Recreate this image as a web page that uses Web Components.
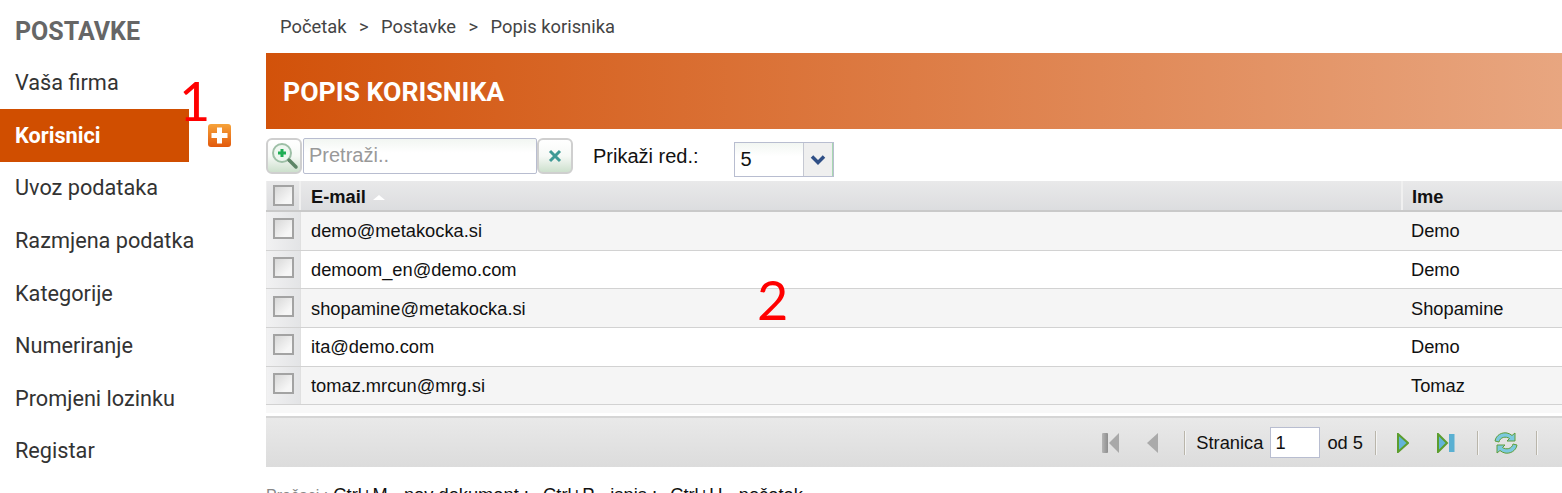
<!DOCTYPE html>
<html lang="hr"><head><meta charset="utf-8"><title>Popis korisnika</title>
<style>
html,body{margin:0;padding:0;height:493px;overflow:hidden;background:#fff}
body{font-family:"Liberation Sans",Arial,sans-serif;position:relative}
app-shell{width:1562px;height:493px}
.mark{position:absolute;color:#f00;font:54px/1 Lato,sans-serif}
</style></head><body>
<template id="t-shell"><style>
:host{display:flex;align-items:flex-start}
.main{flex:1;min-width:0}
</style><slot name="side"></slot><div class="main"><slot></slot></div></template>

<template id="t-side"><style>
:host{display:block;width:266px;flex:none;font-family:Roboto,sans-serif;position:relative}
h2{margin:0;padding:19px 0 0 15px;height:37.400px;font:700 25px/26px Roboto,sans-serif;color:#666}
</style><h2><slot name="title"></slot></h2><slot></slot></template>

<template id="t-item"><style>
:host{display:block;height:52.600px;position:relative}
a{display:flex;align-items:center;box-sizing:border-box;height:100%;padding-left:15px;font:21.700px Roboto,sans-serif;color:#333}
:host([active]) a{width:189px;background:#d04e00;color:#fff;font-weight:700}
svg{position:absolute;left:207px;top:14px}
:host(:not([add])) svg{display:none}
</style><a><slot></slot></a><svg width="25" height="25" viewBox="0 0 25 25"><defs><linearGradient id="g" x1="0" y1="0" x2="0" y2="1"><stop offset="0" stop-color="#f6a33a"/><stop offset="1" stop-color="#e2590c"/></linearGradient></defs><rect x="1" y="1" width="23" height="23" rx="3" fill="url(#g)"/><path d="M10 4.500h5V10h5.500v5H15v5.500h-5V15H4.500v-5H10z" fill="#fff"/></svg></template>

<template id="t-crumbs"><style>
:host{display:flex;gap:12.500px;height:53px;box-sizing:border-box;padding:17px 0 0 14px;font:18.330px/20px Roboto,sans-serif;color:#444}
</style><slot></slot></template>

<template id="t-banner"><style>
:host{display:flex;align-items:center;height:76px;box-sizing:border-box;padding:1px 0 0 17px;background:linear-gradient(90deg,#d2520a 0%,#e8a680 100%);color:#fff;font:700 26.660px Roboto,sans-serif}
</style><slot></slot></template>

<template id="t-toolbar"><style>
:host{display:flex;align-items:center;height:52px;box-sizing:border-box;padding-top:2px;font:20px "Liberation Sans",sans-serif;color:#111}
.btn{box-sizing:border-box;width:36px;height:36px;border:2px solid #cfcfcf;border-radius:6px;background:linear-gradient(#fff 0%,#f6f9f6 50%,#cde0cd 100%);display:flex;align-items:center;justify-content:center;flex:none}
.inp{box-sizing:border-box;width:234px;height:36px;border:1px solid #b8bdd0;border-radius:2px;background:linear-gradient(#f2f6f2,#fff 40%);margin:0 0 0 1px;padding:0 5px;font:20px/32px "Liberation Sans",sans-serif;color:#999}
.lbl{margin:0 35px 0 20px}
.sel{box-sizing:border-box;width:100px;height:35px;margin-top:7px;border:1px solid #b8bdd0;display:flex;background:linear-gradient(#f2f6f2,#fff 40%);line-height:33px}
.sel span{flex:1;padding-left:6px}
.sel i{width:28px;border-left:1px solid #c5c8d2;background:#efefef;display:flex;align-items:center;justify-content:center;border-right:1px solid #a8d8b0}
</style>
<div class="btn"><svg width="30" height="30" viewBox="0 0 30 30"><circle cx="13" cy="12" r="9" fill="#eef7f0" stroke="#9dbfa6" stroke-width="2"/><path d="M20 19l7 7" stroke="#5d8566" stroke-width="3.500" stroke-linecap="round"/><path d="M13 8v8M9 12h8" stroke="#1fae55" stroke-width="3"/></svg></div>
<div class="inp">Pretraži..</div>
<div class="btn"><svg width="18" height="18" viewBox="0 0 18 18"><path d="M4 4l10 10M14 4L4 14" stroke="#3f9a96" stroke-width="3"/></svg></div>
<span class="lbl">Prikaži red.:</span>
<div class="sel"><span>5</span><i><svg width="16" height="12" viewBox="0 0 16 12"><path d="M2 2.500l6 6 6-6" fill="none" stroke="#2f4f86" stroke-width="3.500"/></svg></i></div>
</template>

<template id="t-grid"><style>
:host{display:block;font:18.300px "Liberation Sans",sans-serif;color:#111;background:linear-gradient(#fff,#fff) no-repeat 0 100%/100% 3px,#f8f8f8;padding-bottom:11px}
</style><slot></slot></template>

<template id="t-row"><style>
:host{display:grid;grid-template-columns:35px 1100px 1fr;box-sizing:border-box;height:38.700px;border-bottom:1px solid #d2d2d2;background:#f5f5f5;align-items:stretch}
:host([even]){background:#fff}
:host([head]){height:31px;background:linear-gradient(#e9e9ea,#dcdddf);border-bottom:2px solid #c9c9c9;font-weight:700}
.c{display:flex;align-items:center;padding:1px 0 0 10px;min-width:0}
:host([head]) .c{padding-top:3px}
:host([head]) .c.ime{border-left:2px solid #f0f0f0;padding-left:9px}
.chk{background:linear-gradient(90deg,#f1f1f2,#e3e4e6);border-right:1px solid #e0e0e0;padding:0 0 4px 6px;border-left:1px solid #eee;box-sizing:border-box}
:host([head]) .chk{padding:0 0 0 6px;background:none;border-right:2px solid #f0f0f0}
.box{width:21px;height:21px;box-sizing:border-box;border:2px solid #a3a3a3;background:linear-gradient(135deg,#d8d8d8,#f6f6f6 75%)}
.sort{width:0;height:0;border:6px solid transparent;border-top:0;border-bottom:5px solid #fff;margin-left:7px}
</style><div class="c chk"><div class="box"></div></div><div class="c"><slot name="mail"></slot><span class="sort" id="s" hidden></span></div><div class="c ime"><slot name="ime"></slot></div></template>

<template id="t-pager"><style>
:host{display:flex;align-items:center;justify-content:flex-end;box-sizing:border-box;height:51px;padding-right:24px;border-top:2px solid #d5d5d5;background:linear-gradient(#e9e9e9,#dcdcdc);font:18.300px "Liberation Sans",sans-serif;color:#111}
.sep{height:24px;background:#b9b5aa;border-right:1px solid #f4f4f4;box-sizing:content-box;width:1px}
svg{display:block}
input{box-sizing:border-box;width:50px;height:31px;border:1px solid #b8bdd0;margin:0 7px;padding:0 4px;font:inherit;color:#111;background:#fff}
</style>
<svg width="19" height="22" viewBox="0 0 19 22" style="margin-right:26px"><defs><linearGradient id="gr" x1="0" y1="0" x2="1" y2="0"><stop offset="0" stop-color="#b5b5b5"/><stop offset="1" stop-color="#8d8d8d"/></linearGradient></defs><rect x="1" y="1" width="6" height="20" rx="1" fill="url(#gr)"/><path d="M18 1v20L8 11z" fill="#a9a9a9"/></svg>
<svg width="13" height="22" viewBox="0 0 13 22" style="margin-right:25px"><path d="M12 1v20L1 11z" fill="#aaa"/></svg>
<span class="sep"></span><span style="margin-left:10px">Stranica</span><input value="1" aria-label="Stranica"><span>od 5</span><span class="sep" style="margin-left:12px"></span>
<svg width="12" height="20" viewBox="0 0 12 20" style="margin:0 28px 0 20px"><path d="M1 1v18l10-9z" fill="#63b4d8" stroke="#5c9e2e" stroke-width="2"/></svg>
<svg width="18" height="20" viewBox="0 0 18 20" style="margin:0 22px 0 0"><path d="M1 1v18l9-9z" fill="#63b4d8" stroke="#5c9e2e" stroke-width="2"/><rect x="12" y="1" width="5.500" height="18" fill="#5ab0d2"/></svg>
<span class="sep"></span>
<svg width="26" height="26" viewBox="0 0 26 26" style="margin:0 17px 0 14px"><path d="M2 11C3 5 9 2 14 3c2 .4 3.500 1.200 5 2.500L22 3v8h-8l2.500-2.500C13 6 7 7 6 12z" fill="#7cc9de" stroke="#5f9e3a"/><path d="M24 15c-1 6-7 9-12 8-2-.4-3.500-1.200-5-2.500L4 23v-8h8l-2.500 2.500C13 20 19 19 20 14z" fill="#7cc9de" stroke="#5f9e3a"/></svg>
<span class="sep"></span></template>

<template id="t-foot"><style>
:host{display:block;padding-top:18px;font:18.300px/20px "Liberation Sans",sans-serif;color:#111;white-space:nowrap}
b{font-weight:400;color:#888;font-size:16px}
</style><b>Prečaci :</b> <slot></slot></template>

<app-shell>
<side-nav slot="side"><span slot="title">POSTAVKE</span>
<nav-item>Vaša firma</nav-item><nav-item active add>Korisnici</nav-item><nav-item>Uvoz podataka</nav-item><nav-item>Razmjena podatka</nav-item><nav-item>Kategorije</nav-item><nav-item>Numeriranje</nav-item><nav-item>Promjeni lozinku</nav-item><nav-item>Registar</nav-item></side-nav>
<bread-crumbs><span>Početak</span><span>&gt;</span><span>Postavke</span><span>&gt;</span><span>Popis korisnika</span></bread-crumbs>
<page-banner>POPIS KORISNIKA</page-banner>
<grid-toolbar></grid-toolbar>
<data-grid>
<grid-row head sort><span slot="mail">E-mail</span><span slot="ime">Ime</span></grid-row>
<grid-row><span slot="mail">demo@metakocka.si</span><span slot="ime">Demo</span></grid-row>
<grid-row even><span slot="mail">demoom_en@demo.com</span><span slot="ime">Demo</span></grid-row>
<grid-row><span slot="mail">shopamine@metakocka.si</span><span slot="ime">Shopamine</span></grid-row>
<grid-row even><span slot="mail">ita@demo.com</span><span slot="ime">Demo</span></grid-row>
<grid-row><span slot="mail">tomaz.mrcun@mrg.si</span><span slot="ime">Tomaz</span></grid-row>
</data-grid>
<grid-pager></grid-pager>
<foot-hints>Ctrl+M - nov dokument ; &nbsp;<span style="margin-left:4px">Ctrl+P - ispis ;</span> &nbsp;<span style="margin-left:3px">Ctrl+U - početak</span></foot-hints>
</app-shell>
<div class="mark" style="left:179px;top:74px">1</div>
<div class="mark" style="left:757px;top:273px">2</div>
<script>
function def(name,tpl,init){customElements.define(name,class extends HTMLElement{constructor(){super();const r=this.attachShadow({mode:'open'});r.appendChild(document.getElementById(tpl).content.cloneNode(true));}connectedCallback(){init&&init(this)}})}
def('app-shell','t-shell');def('side-nav','t-side');
def('nav-item','t-item');
def('bread-crumbs','t-crumbs');def('page-banner','t-banner');def('grid-toolbar','t-toolbar');def('data-grid','t-grid');
def('grid-row','t-row',e=>{if(e.hasAttribute('sort'))e.shadowRoot.getElementById('s').removeAttribute('hidden')});
def('grid-pager','t-pager');def('foot-hints','t-foot');
</script>
</body></html>
